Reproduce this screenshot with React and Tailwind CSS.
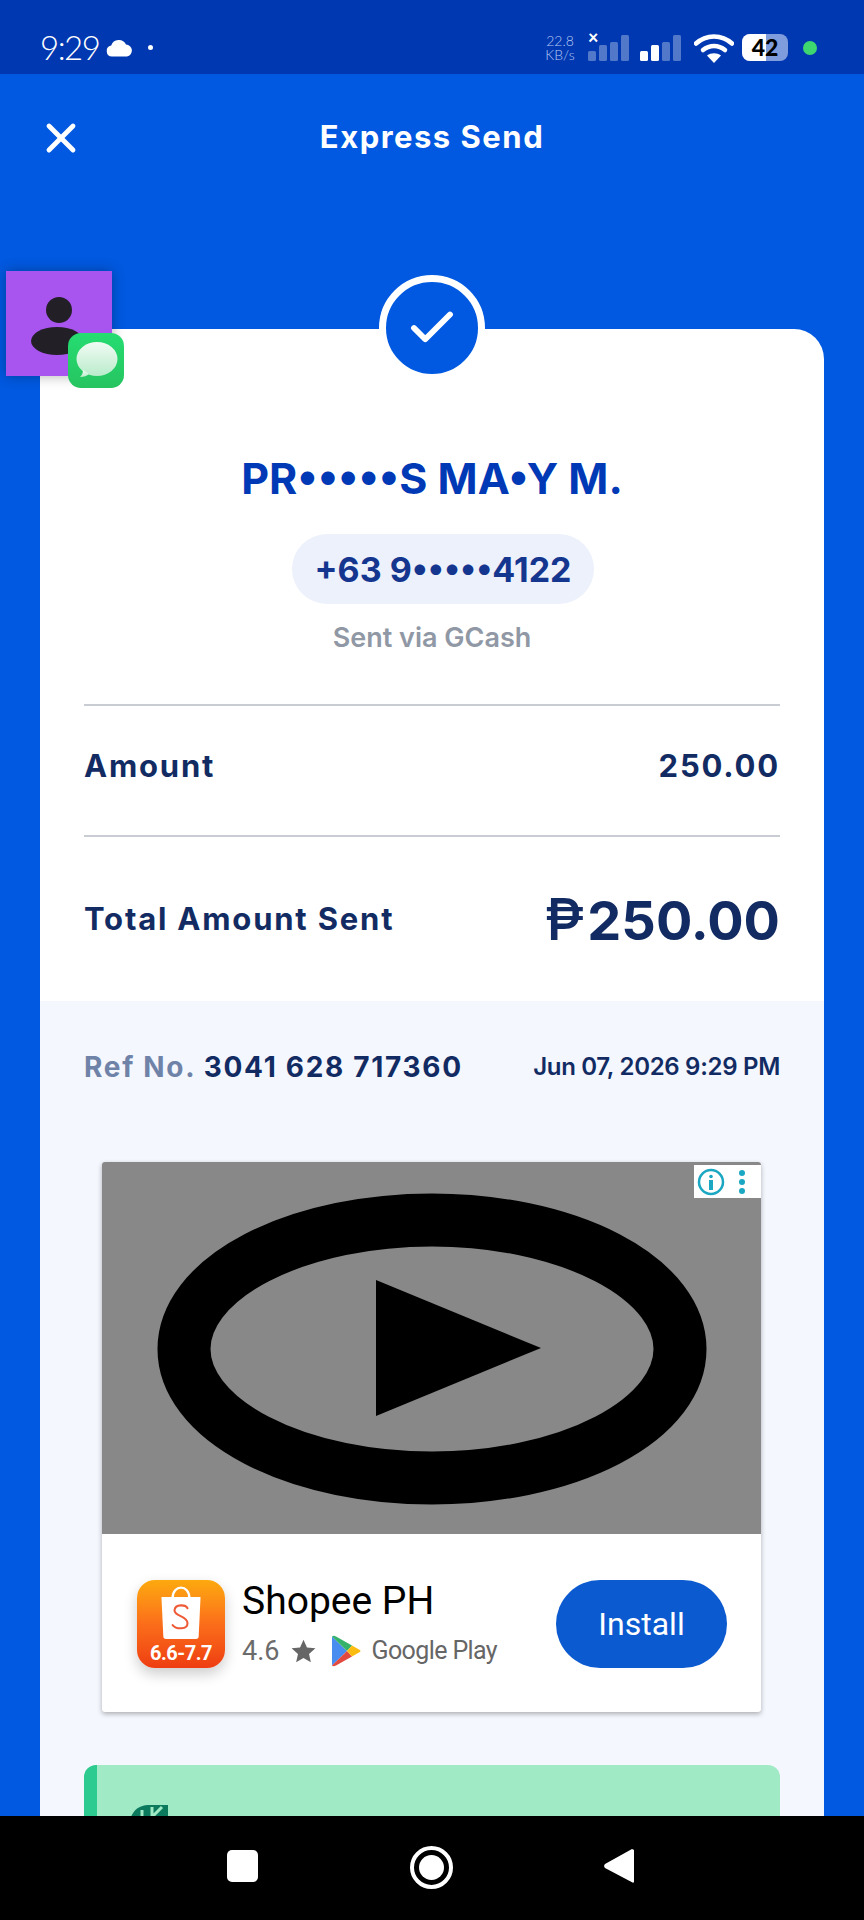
import React from 'react';
import { X, Check } from 'lucide-react';

const appFont = "font-['Inter',sans-serif]";

function SignalBars({ lit }) {
  const bars = [
    { x: 0, h: 10 },
    { x: 11, h: 16 },
    { x: 22, h: 19 },
    { x: 33, h: 26 },
  ];
  return (
    <svg width="42" height="28" viewBox="0 0 42 28">
      {bars.map((b, i) => (
        <rect
          key={b.x}
          x={b.x}
          y={27 - b.h}
          width="8"
          height={b.h}
          rx="1.5"
          fill="#fff"
          fillOpacity={i < lit ? 1 : 0.32}
        />
      ))}
    </svg>
  );
}

function StatusBar() {
  return (
    <div className="h-[74px] bg-[#0038b1] flex items-center justify-between pt-[21px] pl-[40px] pr-[47px] text-white shrink-0">
      <div className="flex items-center">
        <span className="font-['Lato',sans-serif] font-light text-[33px] leading-none tracking-[-1.5px] w-[52px]">9:29</span>
        <svg className="ml-[14px]" width="27" height="18" viewBox="0 0 27 18">
          <path d="M6 17.5a5.5 5.5 0 0 1-.8-10.9A8 8 0 0 1 20 5.6a6 6 0 0 1 1 11.9z" fill="#fff" />
        </svg>
        <div className="ml-[15px] w-[5px] h-[5px] rounded-full bg-white" />
      </div>
      <div className="flex items-center">
        <div className="w-[30px] text-center font-['Lato',sans-serif] font-light text-[#b9c9f2] text-[14px] leading-[14px]">
          <div>22.8</div>
          <div>KB/s</div>
        </div>
        <div className="relative ml-[13px]">
          <SignalBars lit={0} />
          <span className="absolute left-[0px] -top-[6px] text-[18px] font-black leading-none font-['Lato',sans-serif]">×</span>
        </div>
        <div className="ml-[10px]">
          <SignalBars lit={2} />
        </div>
        <svg className="ml-[12px]" width="40" height="30" viewBox="0 0 40 30">
          <path d="M2 10.5C12 1 28 1 38 10.5" fill="none" stroke="#fff" strokeWidth="4.5" strokeLinecap="round" />
          <path d="M9 17c6.500-5.500 15.500-5.500 22 0" fill="none" stroke="#fff" strokeWidth="4.500" strokeLinecap="round" />
          <path d="M13 22.500c4-3 10-3 14 0L20 30z" fill="#fff" />
        </svg>
        <div className="ml-[8px] relative w-[46px] h-[27px] rounded-[8px] bg-[#7f9ddc] overflow-hidden flex items-center justify-center">
          <div className="absolute left-0 top-0 bottom-0 w-[24px] bg-white" />
          <span className="relative text-black font-['Lato',sans-serif] font-black text-[23px] leading-none">42</span>
        </div>
        <div className="ml-[15px] w-[14px] h-[14px] rounded-full bg-[#3ed66f]" />
      </div>
    </div>
  );
}

function FloatingChatHead() {
  return (
    <div className="absolute left-[6px] top-[271px] w-[106px] h-[105px] bg-[#a855f0] shadow-[0_0_12px_rgba(0,0,0,0.3)]">
      <svg width="106" height="105" viewBox="0 0 106 105">
        <circle cx="53" cy="39" r="13" fill="#231f26" />
        <ellipse cx="51" cy="70" rx="26" ry="14" fill="#231f26" />
      </svg>
      <div className="absolute left-[62px] top-[62px] w-[56px] h-[55px] rounded-[13px] bg-gradient-to-b from-[#25dd72] to-[#26c460] flex items-center justify-center">
        <svg width="46" height="40" viewBox="0 0 46 40">
          <defs>
            <linearGradient id="bubble" x1="0" y1="0" x2="0" y2="1">
              <stop offset="0" stopColor="#f1fbf4" />
              <stop offset="1" stopColor="#b9eccb" />
            </linearGradient>
          </defs>
          <ellipse cx="24" cy="18" rx="20.500" ry="17" fill="url(#bubble)" />
          <path d="M10 29c0 3-1 5-3 7 4 0 7-1 9-3z" fill="url(#bubble)" />
        </svg>
      </div>
    </div>
  );
}

function PlayPlaceholder() {
  return (
    <svg className="absolute inset-0" width="659" height="372" viewBox="0 0 659 372">
      <ellipse cx="330" cy="187" rx="248" ry="129" fill="none" stroke="#000" strokeWidth="53" />
      <path d="M274 118 L439 186 L274 254 Z" fill="#000" />
    </svg>
  );
}

function ShopeeIcon() {
  return (
    <div className="relative w-[88px] h-[88px] rounded-[18px] bg-gradient-to-b from-[#fca90e] via-[#fb6d1a] to-[#ee3c12] shadow-[0_6px_14px_rgba(0,0,0,0.2)] flex flex-col items-center shrink-0">
      <svg className="mt-[5px]" width="46" height="54" viewBox="0 0 46 58">
        <path d="M14 14c0-15 18-15 18 0" fill="none" stroke="#fff" strokeWidth="2.500" />
        <path d="M2 13h42l-2 42a3 3 0 0 1-3 3H7a3 3 0 0 1-3-3z" fill="#fff" />
        <path d="M30 25c-2-4-13-5-14 2 0 7 14 6 14 14 0 7-12 7-16 2" fill="none" stroke="#ee5a36" strokeWidth="2.200" strokeLinecap="round" />
      </svg>
      <span className="font-['Roboto',sans-serif] font-bold text-white text-[20px] leading-none mt-[4px] tracking-[-0.5px] whitespace-nowrap">6.6-7.7</span>
    </div>
  );
}

function GooglePlayIcon() {
  return (
    <svg width="30" height="32" viewBox="0 0 30 32">
      <path d="M1 1.500 L16 16 L1 30.500 Z" fill="#4a8df0" />
      <path d="M1 1.500 C2 0.500 3 0.500 5 1.500 L21 10.500 L16 16 Z" fill="#36b26b" />
      <path d="M1 30.500 C2 31.500 3 31.500 5 30.500 L21 21.500 L16 16 Z" fill="#e2493f" />
      <path d="M21 10.500 L28 14.500 C30 15.500 30 16.500 28 17.500 L21 21.500 L16 16 Z" fill="#fbbc12" />
    </svg>
  );
}

function AdCard() {
  return (
    <div className="w-[659px] ml-[62px] bg-white rounded-[3px] shadow-[0_2px_5px_rgba(0,0,0,0.3)]">
      <div className="relative h-[372px] bg-[#888888] rounded-t-[3px] overflow-hidden">
        <PlayPlaceholder />
        <div className="absolute right-0 top-[3px] w-[67px] h-[33px] bg-white flex items-center">
          <svg className="ml-[3px]" width="28" height="28" viewBox="0 0 28 28">
            <circle cx="14" cy="14" r="12" fill="none" stroke="#1ba6c2" strokeWidth="2.500" />
            <circle cx="14" cy="8.500" r="1.800" fill="#1ba6c2" />
            <rect x="12" y="12" width="4" height="10" fill="#1ba6c2" />
          </svg>
          <div className="ml-[14px] flex flex-col gap-[3px]">
            <div className="w-[6px] h-[6px] rounded-full bg-[#1ba6c2]" />
            <div className="w-[6px] h-[6px] rounded-full bg-[#1ba6c2]" />
            <div className="w-[6px] h-[6px] rounded-full bg-[#1ba6c2]" />
          </div>
        </div>
      </div>
      <div className="h-[178px] flex items-start pt-[46px] pl-[35px] pr-[34px]">
        <ShopeeIcon />
        <div className="ml-[17px] flex-1">
          <div className="font-['Roboto',sans-serif] text-[39px] leading-[44px] -mt-[1px] text-black">Shopee PH</div>
          <div className="flex items-center mt-[12px] text-[#6b6b6b] font-['Roboto',sans-serif]">
            <span className="text-[27px] leading-[32px]">4.6</span>
            <svg className="ml-[11px]" width="27" height="26" viewBox="0 0 24 24">
              <path d="M12 1.500l3.200 7.200 7.800.8-5.900 5.200 1.700 7.700L12 18.400l-6.800 4 1.700-7.700L1 9.500l7.800-.8z" fill="#666" />
            </svg>
            <div className="ml-[14px]">
              <GooglePlayIcon />
            </div>
            <span className="ml-[10px] text-[25px] leading-[32px] tracking-[-0.6px] text-[#666]">Google Play</span>
          </div>
        </div>
        <div className="w-[171px] h-[88px] rounded-full bg-[#0b5ad0] flex items-center justify-center text-white font-['Roboto',sans-serif] text-[32px]">
          Install
        </div>
      </div>
    </div>
  );
}

function ReceiptCard() {
  return (
    <div className={`relative mx-[40px] rounded-t-[30px] bg-white ${appFont}`}>
      <div className="absolute left-1/2 -translate-x-1/2 -top-[54px] w-[106px] h-[106px] rounded-full bg-[#0059e0] border-[7px] border-white flex items-center justify-center">
        <Check className="text-white" size={54} strokeWidth={2.6} />
      </div>

      <div className="px-[44px] pt-[125px]">
        <div className="text-center text-[#0039b5] font-bold text-[43px] leading-[48px] whitespace-nowrap">PR•••••S MA•Y M.</div>
        <div className="flex justify-center mt-[32px]">
          <div className="ml-[22px] h-[70px] w-[302px] rounded-full bg-[#edf1fb] flex items-center justify-center text-[#14368f] font-bold text-[34px] whitespace-nowrap">
            +63 9•••••4122
          </div>
        </div>
        <div className="mt-[19px] text-center text-[#9098a5] font-semibold text-[27px] leading-[30px]">Sent via GCash</div>

        <div className="mt-[51px] h-[2px] bg-[#c9cdd3]" />
        <div className="h-[129px] flex items-center justify-between pb-[8px] text-[#122c63] font-bold text-[31px] tracking-[1.8px]">
          <span>Amount</span>
          <span>250.00</span>
        </div>
        <div className="h-[2px] bg-[#c9cdd3]" />
        <div className="h-[164px] flex items-center justify-between text-[#122c63] font-bold">
          <span className="text-[31px] tracking-[1.8px]">Total Amount Sent</span>
          <span className="text-[54px] leading-none whitespace-nowrap">
            <span className="font-medium text-[58px] mr-[3px]">₱</span>250.00
          </span>
        </div>
      </div>

      <div className="bg-[#f4f7fe] pt-[48px] h-[816px] px-[44px] overflow-hidden">
        <div className="flex items-center justify-between h-[36px] font-bold">
          <div className="text-[28px] tracking-[1.7px] text-[#122c63] whitespace-nowrap">
            <span className="text-[#6f83a8]">Ref No.</span> 3041 628 717360
          </div>
          <span className="text-[24px] font-semibold tracking-[-0.3px] text-[#122c63] whitespace-nowrap">Jun 07, 2026 9:29 PM</span>
        </div>
        <div className="-mx-[44px] mt-[77px]">
          <AdCard />
        </div>
        <div className="mt-[53px] h-[120px] rounded-t-[12px] bg-[#a0eac6] border-l-[13px] border-[#2ecb90] pl-[33px] pt-[40px]">
          <svg width="38" height="38" viewBox="0 0 38 38">
            <path d="M38 0v20c0 10-8 18-18 18H0V18C0 8 8 0 18 0z" fill="#0b7a5d" />
            <path d="M22 12 L22 2 M22 12 L32 2 M12 12 L12 5" stroke="#a0eac6" strokeWidth="3" fill="none" />
          </svg>
        </div>
      </div>
    </div>
  );
}

function NavBar() {
  return (
    <div className="absolute left-0 right-0 bottom-0 h-[104px] bg-black flex items-center justify-center text-white">
      <div className="w-[31px] h-[32px] rounded-[5px] bg-white -mt-[4px] -ml-[4px]" />
      <div className="ml-[152px] w-[43px] h-[43px] rounded-full border-[4px] border-white flex items-center justify-center -mt-[2px]">
        <div className="w-[25px] h-[25px] rounded-full bg-white" />
      </div>
      <svg className="ml-[151px] -mt-[4px]" width="30" height="36" viewBox="0 0 30 36">
        <path d="M29 1.500a1 1 0 0 1 1 1v31a1 1 0 0 1-1.500 1L1 20a3 3 0 0 1 0-4L28 1z" fill="#fff" />
      </svg>
    </div>
  );
}

export default function App() {
  return (
    <div className="relative w-[864px] h-[1920px] overflow-hidden bg-[#0059e0]">
      <StatusBar />
      <div className="h-[128px] relative flex items-center justify-center text-white">
        <X className="absolute left-[37px] -mt-[1px]" size={48} strokeWidth={2.4} />
        <span className={`${appFont} font-bold text-[31px] -mt-[2px] tracking-[1.5px]`}>Express Send</span>
      </div>
      <div className="pt-[127px]">
        <ReceiptCard />
      </div>
      <FloatingChatHead />
      <NavBar />
    </div>
  );
}
